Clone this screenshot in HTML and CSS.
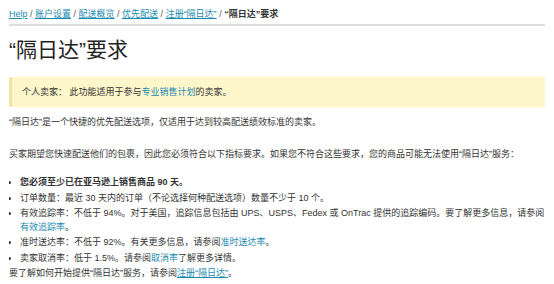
FILE: index.html
```html
<!DOCTYPE html>
<html lang="zh-CN">
<head>
  <meta charset="UTF-8">
  <title>“隔日达”要求</title>
  <link rel="stylesheet" href="styles.css">
</head>
<body>
  <div class="breadcrumb">
    <a href="#">Help</a> / <a href="#">账户设置</a> / <a href="#">配送概览</a> / <a href="#">优先配送</a> / <a href="#">注册“隔日达”</a> / <span class="current">“隔日达”要求</span>
  </div>

  <h1>“隔日达”要求</h1>

  <div class="notice">
    个人卖家： 此功能适用于参与<a href="#">专业销售计划</a>的卖家。
  </div>

  <p class="intro">“隔日达”是一个快捷的优先配送选项，仅适用于达到较高配送绩效标准的卖家。</p>

  <p class="lead">买家期望您快速配送他们的包裹，因此您必须符合以下指标要求。如果您不符合这些要求，您的商品可能无法使用“隔日达”服务：</p>

  <ul class="reqs">
    <li><strong>您必须至少已在亚马逊上销售商品 90 天。</strong></li>
    <li>订单数量：最近 30 天内的订单（不论选择何种配送选项）数量不少于 10 个。</li>
    <li>有效追踪率：不低于 94%。对于美国，追踪信息包括由 UPS、USPS、Fedex 或 OnTrac 提供的追踪编码。要了解更多信息，请参阅<a href="#">有效追踪率</a>。</li>
    <li>准时送达率：不低于 92%。有关更多信息，请参阅<a href="#">准时送达率</a>。</li>
    <li>卖家取消率：低于 1.5%。请参阅<a href="#">取消率</a>了解更多详情。</li>
  </ul>
  <p class="outro">要了解如何开始提供“隔日达”服务，请参阅<a class="ul" href="#">注册“隔日达”</a>。</p>
</body>
</html>
```

FILE: styles.css
```css
body {
  margin: 8px 9px;
  font-family: "Liberation Sans", "Noto Sans CJK SC", sans-serif;
  font-size: 9px;
  color: #333;
}
a {
  color: #1b8ab0;
  text-decoration: none;
}
.breadcrumb {
  line-height: 13px;
  padding-bottom: 3px;
  border-bottom: 2px solid #ddd;
  color: #555;
}
.breadcrumb a {
  text-decoration: underline;
}
.breadcrumb .current {
  font-weight: bold;
  color: #333;
}
h1 {
  font-size: 21px;
  font-weight: normal;
  line-height: 26px;
  margin: 11px 0 14px;
  color: #222;
}
.notice {
  background-color: #fff7cc;
  border-left: 3px solid #f1e3a4;
  padding: 8px 10px;
  line-height: 14px;
}
.intro {
  margin: 9px 0 0;
  line-height: 13px;
}
.lead {
  margin: 19px 0 0;
  line-height: 13px;
}
.reqs {
  margin: 15px 0 0;
  padding-left: 11px;
  line-height: 13.5px;
}
.reqs li {
  margin-bottom: 2px;
}
.outro {
  margin: 0;
  line-height: 13.5px;
}
.outro .ul {
  text-decoration: underline;
}
```
